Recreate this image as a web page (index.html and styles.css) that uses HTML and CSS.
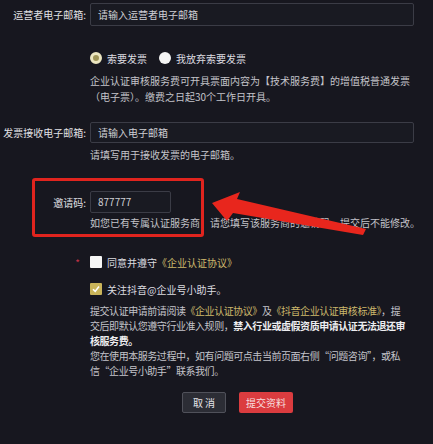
FILE: index.html
```html
<html>

<head>
    <link rel="stylesheet" href="styles.css">
</head>

<body>
    <div class="form">
        <div class="field first">
            <label class="label">运营者电子邮箱:</label>
            <div class="input wide">请输入运营者电子邮箱</div>
        </div>

        <div class="field radios">
            <span class="label"></span>
            <span class="radio on"></span><span class="opt">索要发票</span>
            <span class="radio"></span><span class="opt">我放弃索要发票</span>
        </div>

        <div class="field desc">
            <span class="label"></span>
            <p class="note">企业认证审核服务费可开具票面内容为【技术服务费】的增值税普通发票<br>（电子票）。缴费之日起30个工作日开具。</p>
        </div>

        <div class="field second">
            <label class="label">发票接收电子邮箱:</label>
            <div class="input wide">请输入电子邮箱</div>
        </div>
        <div class="field hint">
            <span class="label"></span>
            <p class="note">请填写用于接收发票的电子邮箱。</p>
        </div>

        <div class="field invite">
            <label class="label">邀请码:</label>
            <div class="input short filled">877777</div>
        </div>
        <div class="field hint tight">
            <span class="label"></span>
            <p class="note">如您已有专属认证服务商，请您填写该服务商的邀请码，提交后不能修改。</p>
        </div>

        <div class="field check-row agree">
            <span class="label"><span class="star">*</span></span>
            <span class="box"></span>
            <span class="opt">同意并遵守<span class="gold">《企业认证协议》</span></span>
        </div>

        <div class="field check-row follow">
            <span class="label"></span>
            <span class="box checked">
                <svg width="12" height="12" viewBox="0 0 12 12"><path d="M3 6.2 L5.2 8.4 L9 3.6" fill="none" stroke="#fff" stroke-width="1.6"/></svg>
            </span>
            <span class="opt">关注抖音@企业号小助手。</span>
        </div>

        <div class="field terms">
            <span class="label"></span>
            <p class="note para">提交认证申请前请阅读<span class="gold">《企业认证协议》</span>及<span class="gold">《抖音企业认证审核标准》</span>，提<br>交后即默认您遵守行业准入规则，<b>禁入行业或虚假资质申请认证无法退还审<br>核服务费。</b><br>您在使用本服务过程中，如有问题可点击当前页面右侧“问题咨询”，或私<br>信“企业号小助手”联系我们。</p>
        </div>

        <div class="actions">
            <button class="btn cancel">取 消</button>
            <button class="btn submit">提交资料</button>
        </div>
    </div>

    <!-- annotation drawn over the screenshot -->
    <div class="mark-box"></div>
    <svg class="mark-arrow" width="433" height="444" viewBox="0 0 433 444">
        <polygon points="212,203 240,192 237,199 366,229 363,235 233,213 227,221" fill="#e8261d"/>
    </svg>
</body>

</html>
```

FILE: styles.css
```css
body {
    margin: 0;
    background: #17171f;
    color: #d6d6da;
    font-family: "Noto Sans CJK SC", "Noto Sans", sans-serif;
    font-size: 10px;
    width: 433px;
    height: 444px;
    overflow: hidden;
    position: relative;
}

.form {
    padding-top: 3px;
}

.field {
    display: flex;
    align-items: center;
}

.label {
    width: 86px;
    margin-right: 4px;
    text-align: right;
    flex-shrink: 0;
    color: #e0e0e4;
    white-space: nowrap;
}

.input {
    box-sizing: border-box;
    height: 23px;
    line-height: 21px;
    padding: 0 7px;
    border: 1px solid #3b3c46;
    border-radius: 2px;
    background: #191a22;
    color: #cfcfd4;
}

.input.wide {
    width: 324px;
}

.input.short {
    width: 81px;
    height: 22px;
    line-height: 20px;
}

.radios {
    margin-top: 26px;
    height: 12px;
}

.radio {
    box-sizing: border-box;
    width: 12px;
    height: 12px;
    border-radius: 50%;
    background: #f4f4f4;
    margin-right: 5px;
}

.radio.on {
    background: #9f9558;
    border: 3px solid #ece6c0;
}

.opt {
    margin-right: 12px;
    color: #dcdce0;
}

.note {
    margin: 0;
    line-height: 16px;
    color: #c4c4ca;
}

.desc {
    margin-top: 9px;
}

.second {
    margin-top: 17px;
}

.second .input {
    height: 21px;
    line-height: 19px;
}

.hint {
    margin-top: 4px;
}

.invite {
    margin-top: 28px;
}

.hint.tight {
    margin-top: 2px;
}

.check-row {
    height: 16px;
}

.agree {
    margin-top: 23px;
}

.follow {
    margin-top: 11px;
}

.star {
    color: #c53246;
    margin-right: 6px;
}

.box {
    width: 12px;
    height: 12px;
    background: #f6f6f6;
    border-radius: 1px;
    margin-right: 5px;
    display: flex;
}

.box.checked {
    background: #c9b45a;
}

.gold {
    color: #cdb96c;
}

.terms {
    margin-top: 6px;
    align-items: flex-start;
}

.para {
    white-space: nowrap;
    letter-spacing: -0.45px;
    line-height: 15px;
}

.para b {
    color: #ededf0;
}

.actions {
    display: flex;
    gap: 13px;
    margin-top: 14px;
    padding-left: 182px;
}

.btn {
    height: 21px;
    border-radius: 2px;
    font-family: inherit;
    font-size: 10px;
    padding: 0;
}

.cancel {
    width: 44px;
    background: #2c2d35;
    border: 1px solid #50515a;
    color: #e4e4e8;
}

.submit {
    width: 54px;
    background: #db3c3f;
    border: none;
    color: #f6dede;
}

.mark-box {
    position: absolute;
    left: 32px;
    top: 178px;
    width: 166px;
    height: 53px;
    border: 3px solid #e0241e;
    border-radius: 3px;
}

.mark-arrow {
    position: absolute;
    left: 0;
    top: 0;
}
```
